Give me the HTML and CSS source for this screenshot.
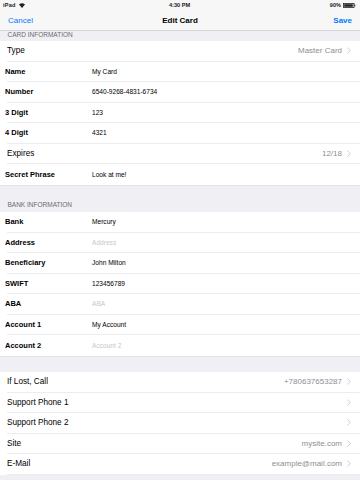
FILE: index.html
```html
<!DOCTYPE html>
<html>
<head>
<meta charset="utf-8">
<link rel="stylesheet" href="styles.css">
</head>
<body>
<div class="screen">
  <div class="status">
    <div class="status-left">iPad
      <svg class="wifi" width="6" height="5" viewBox="0 0 6 5"><path d="M3 5 L0 1.6 A4.5 4.5 0 0 1 6 1.6 Z" fill="#222"/></svg>
    </div>
    <div class="status-center">4:30 PM</div>
    <div class="status-right">90%
      <svg class="battery" width="13" height="5" viewBox="0 0 13 5"><rect x="0.5" y="0.5" width="10.5" height="4" fill="none" stroke="#222" stroke-width="0.8"/><rect x="1.2" y="1.2" width="8.6" height="2.6" fill="#222"/><rect x="11.3" y="1.6" width="1" height="1.8" fill="#222"/></svg>
    </div>
  </div>
  <div class="navbar">
    <span class="nav-btn">Cancel</span>
    <span class="nav-title">Edit Card</span>
    <span class="nav-btn nav-save">Save</span>
  </div>

  <div class="header header-first">CARD INFORMATION</div>
  <div class="group">
    <div class="row"><div class="cell"><span class="std">Type</span><span class="detail">Master Card</span><svg class="chev" width="4" height="7" viewBox="0 0 4 7"><path d="M0.5 0.5 L3.3 3.5 L0.5 6.5" fill="none" stroke="#c7c7cc" stroke-width="0.9"/></svg></div></div>
    <div class="row"><div class="cell"><span class="lbl">Name</span><span class="val">My Card</span></div></div>
    <div class="row"><div class="cell"><span class="lbl">Number</span><span class="val">6540-9268-4831-6734</span></div></div>
    <div class="row"><div class="cell"><span class="lbl">3 Digit</span><span class="val">123</span></div></div>
    <div class="row"><div class="cell"><span class="lbl">4 Digit</span><span class="val">4321</span></div></div>
    <div class="row"><div class="cell"><span class="std">Expires</span><span class="detail">12/18</span><svg class="chev" width="4" height="7" viewBox="0 0 4 7"><path d="M0.5 0.5 L3.3 3.5 L0.5 6.5" fill="none" stroke="#c7c7cc" stroke-width="0.9"/></svg></div></div>
    <div class="row last"><div class="cell"><span class="lbl">Secret Phrase</span><span class="val">Look at me!</span></div></div>
  </div>

  <div class="header header-bank">BANK INFORMATION</div>
  <div class="group">
    <div class="row"><div class="cell"><span class="lbl">Bank</span><span class="val">Mercury</span></div></div>
    <div class="row"><div class="cell"><span class="lbl">Address</span><span class="val ph">Address</span></div></div>
    <div class="row"><div class="cell"><span class="lbl">Beneficiary</span><span class="val">John Milton</span></div></div>
    <div class="row"><div class="cell"><span class="lbl">SWIFT</span><span class="val">123456789</span></div></div>
    <div class="row"><div class="cell"><span class="lbl">ABA</span><span class="val ph">ABA</span></div></div>
    <div class="row"><div class="cell"><span class="lbl">Account 1</span><span class="val">My Account</span></div></div>
    <div class="row last"><div class="cell"><span class="lbl">Account 2</span><span class="val ph">Account 2</span></div></div>
  </div>

  <div class="header header-plain"></div>
  <div class="group">
    <div class="row"><div class="cell"><span class="std">If Lost, Call</span><span class="detail">+780637653287</span><svg class="chev" width="4" height="7" viewBox="0 0 4 7"><path d="M0.5 0.5 L3.3 3.5 L0.5 6.5" fill="none" stroke="#c7c7cc" stroke-width="0.9"/></svg></div></div>
    <div class="row"><div class="cell"><span class="std">Support Phone 1</span><span class="detail"></span><svg class="chev" width="4" height="7" viewBox="0 0 4 7"><path d="M0.5 0.5 L3.3 3.5 L0.5 6.5" fill="none" stroke="#c7c7cc" stroke-width="0.9"/></svg></div></div>
    <div class="row"><div class="cell"><span class="std">Support Phone 2</span><span class="detail"></span><svg class="chev" width="4" height="7" viewBox="0 0 4 7"><path d="M0.5 0.5 L3.3 3.5 L0.5 6.5" fill="none" stroke="#c7c7cc" stroke-width="0.9"/></svg></div></div>
    <div class="row"><div class="cell"><span class="std">Site</span><span class="detail">mysite.com</span><svg class="chev" width="4" height="7" viewBox="0 0 4 7"><path d="M0.5 0.5 L3.3 3.5 L0.5 6.5" fill="none" stroke="#c7c7cc" stroke-width="0.9"/></svg></div></div>
    <div class="row"><div class="cell"><span class="std">E-Mail</span><span class="detail">example@mail.com</span><svg class="chev" width="4" height="7" viewBox="0 0 4 7"><path d="M0.5 0.5 L3.3 3.5 L0.5 6.5" fill="none" stroke="#c7c7cc" stroke-width="0.9"/></svg></div></div>
  </div>
</div>
</body>
</html>
```

FILE: styles.css
```css
html, body {
  margin: 0;
  padding: 0;
  background: #ffffff;
}
body {
  font-family: "Liberation Sans", Arial, sans-serif;
  color: #000;
}
.screen {
  width: 360px;
  height: 480px;
  overflow: hidden;
  background: #efeff4;
}
.status {
  height: 10px;
  background: #f7f7f8;
  display: grid;
  grid-template-columns: 1fr auto 1fr;
  align-items: center;
  font-size: 5.6px;
  font-weight: 700;
  color: #222;
  padding: 0 4px 0 3px;
}
.status-left {
  display: flex;
  align-items: center;
  gap: 3px;
  letter-spacing: 0.2px;
}
.status-center {
  text-align: center;
}
.status-right {
  display: flex;
  align-items: center;
  justify-content: flex-end;
  gap: 2px;
}
.navbar {
  height: 20px;
  background: #f7f7f8;
  border-bottom: 1px solid #d6d6da;
  display: grid;
  grid-template-columns: 1fr auto 1fr;
  align-items: center;
  padding: 0 8px;
  box-sizing: content-box;
}
.nav-btn {
  color: #007aff;
  font-size: 8px;
}
.nav-title {
  font-size: 8px;
  font-weight: 700;
}
.nav-save {
  font-weight: 700;
  text-align: right;
}
.header {
  background: #efeff4;
  color: #6d6d72;
  font-size: 6.5px;
  padding-left: 7.5px;
  display: flex;
  align-items: flex-end;
  box-sizing: border-box;
}
.header-first {
  height: 10px;
  padding-bottom: 3.5px;
}
.header-bank {
  height: 27.5px;
  padding-bottom: 4.5px;
  border-top: 1px solid #e2e2e6;
}
.header-plain {
  height: 16.5px;
  border-top: 1px solid #e2e2e6;
}
.group {
  background: #ffffff;
}
.row {
  height: 20.5px;
  padding-left: 7px;
  box-sizing: border-box;
}
.cell {
  height: 100%;
  display: flex;
  align-items: center;
  border-bottom: 1px solid #ececef;
  box-sizing: border-box;
  padding-right: 9px;
}
.row.last .cell {
  border-bottom: none;
}
.lbl {
  font-size: 7.5px;
  font-weight: 700;
  width: 87px;
  margin-left: -2px;
  flex: none;
}
.val {
  font-size: 6.6px;
  flex: 1;
}
.ph {
  color: #c7c7cd;
}
.std {
  font-size: 8.2px;
  flex: 1;
}
.detail {
  font-size: 8px;
  color: #8e8e93;
  margin-right: 5px;
}
.chev {
  display: block;
  flex: none;
}
```
